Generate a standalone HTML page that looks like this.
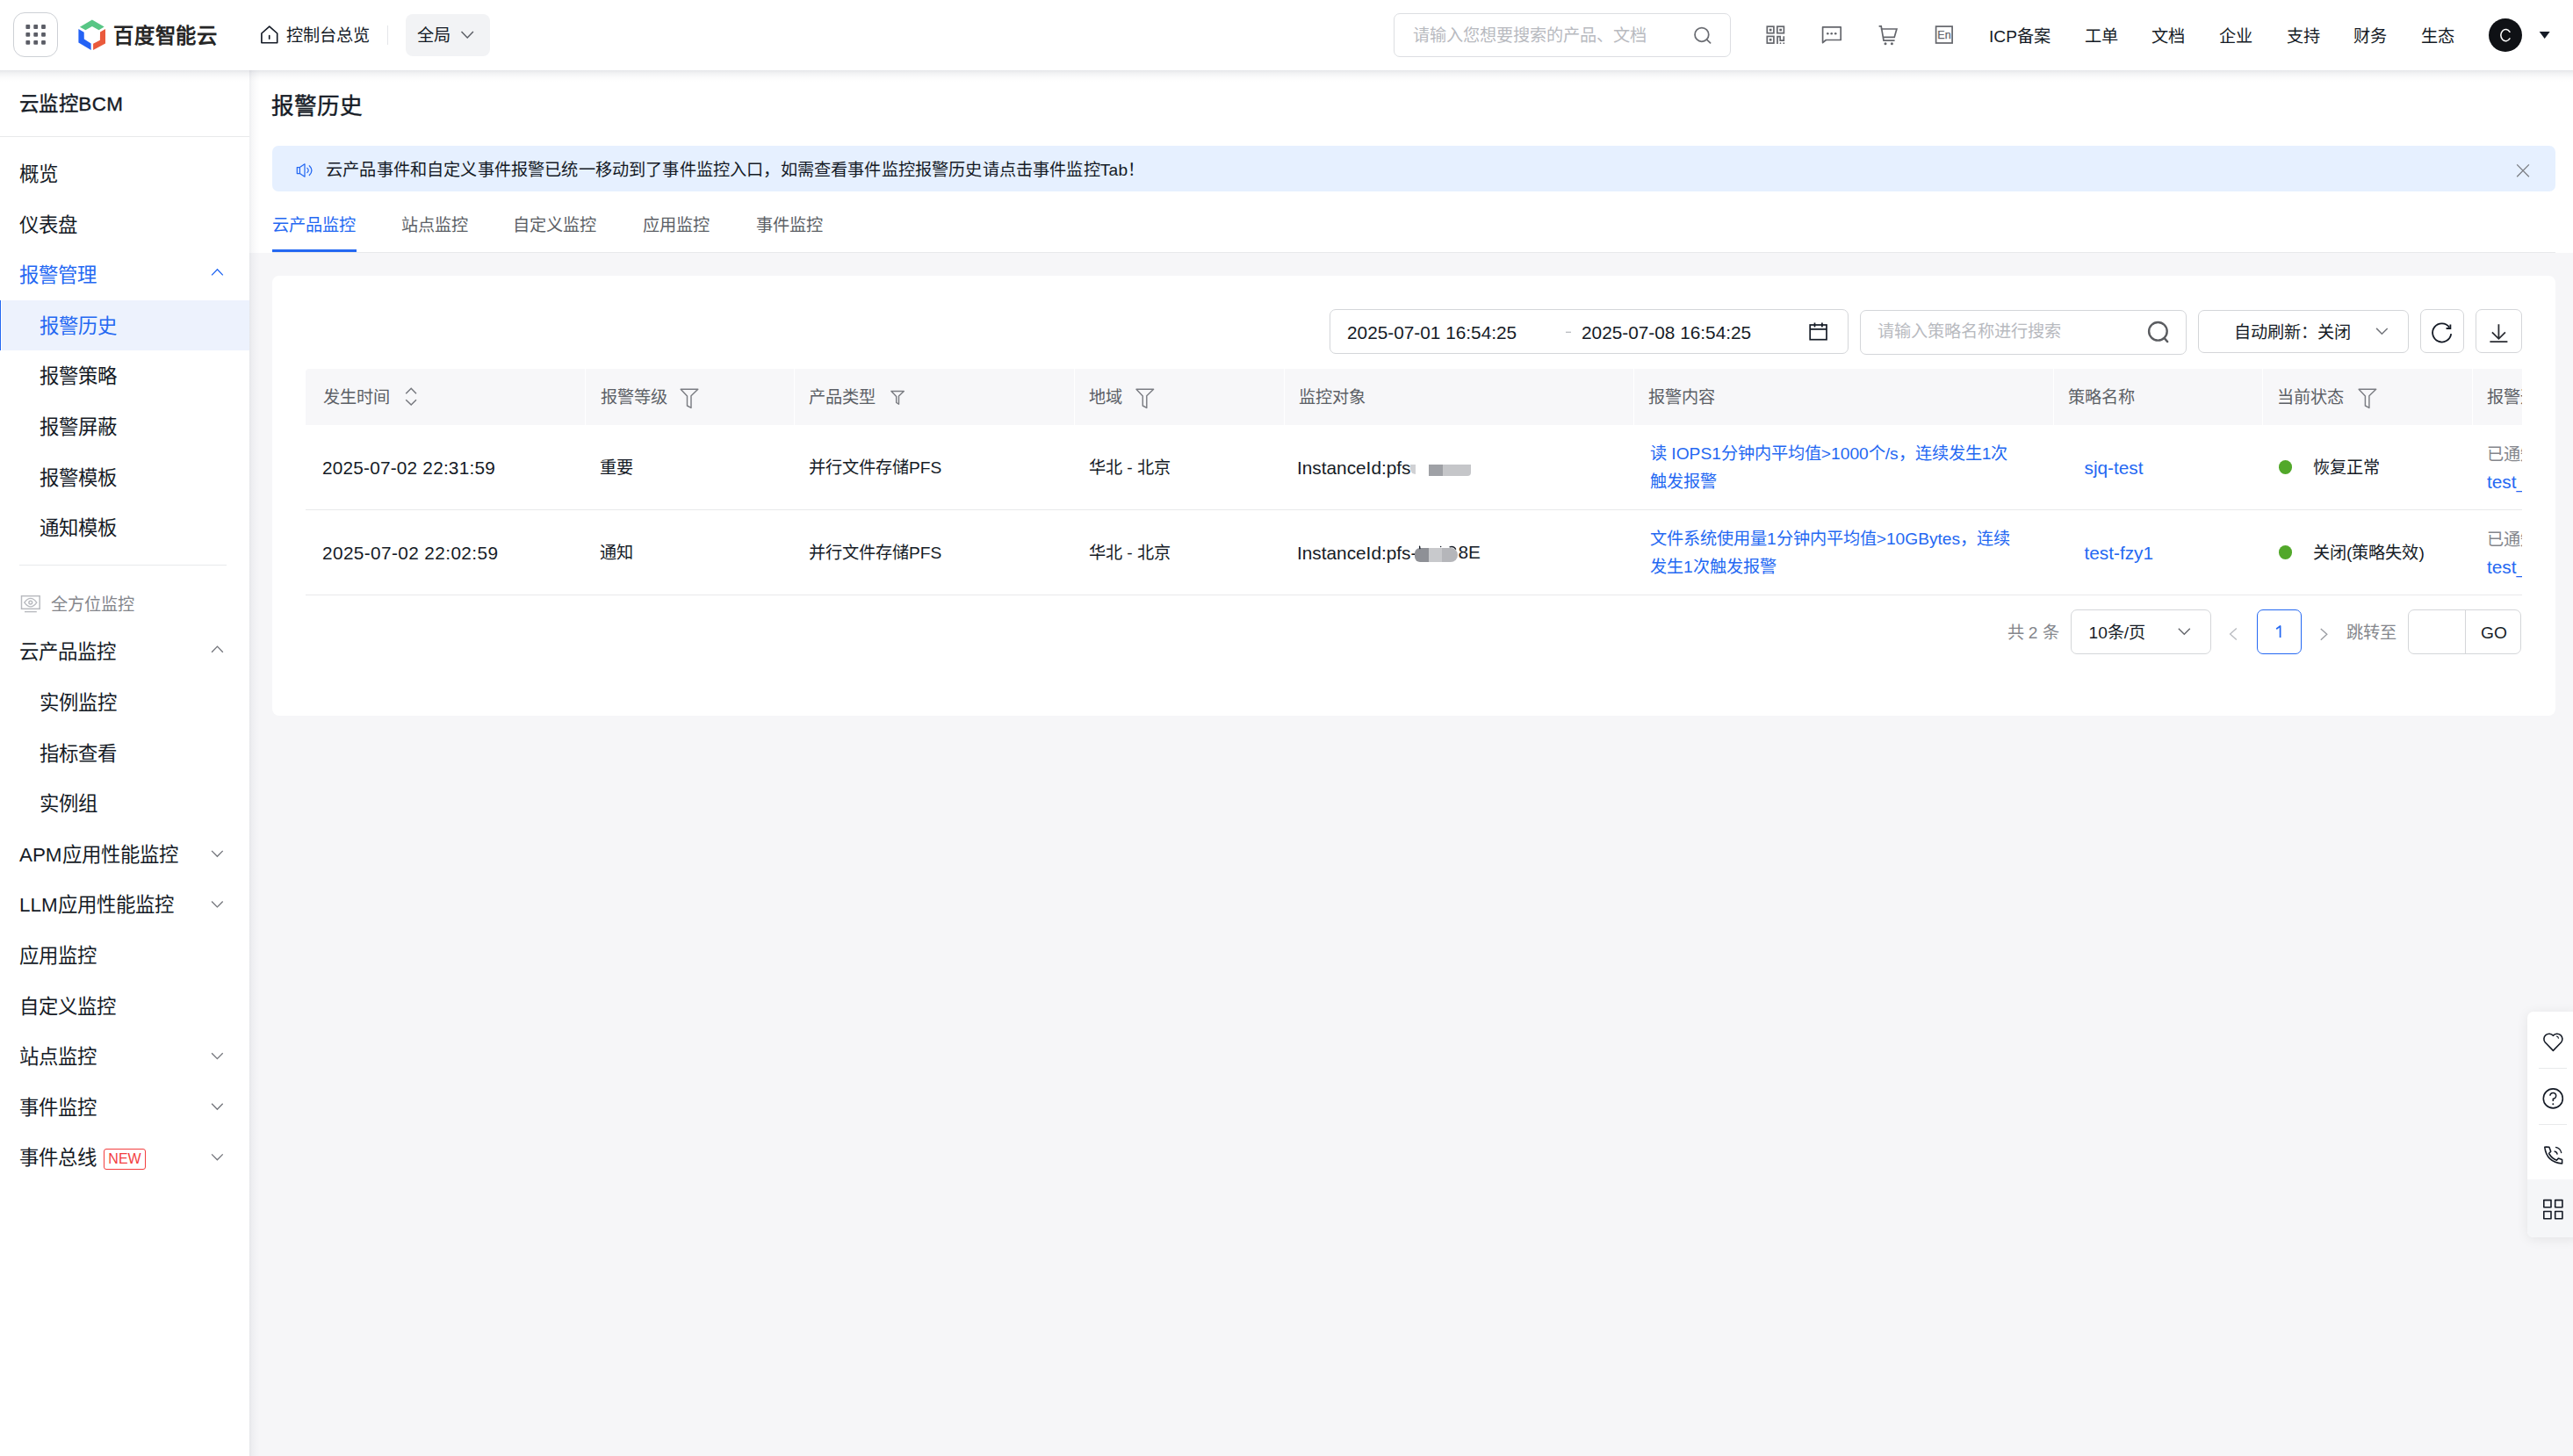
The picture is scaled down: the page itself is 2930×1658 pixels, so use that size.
<!DOCTYPE html>
<html lang="zh-CN">
<head>
<meta charset="utf-8">
<title>报警历史 - 云监控BCM</title>
<style>
*{box-sizing:border-box;margin:0;padding:0}
html,body{width:2930px;height:1658px;overflow:hidden}
body{position:relative;background:#f6f6f8;font-family:"Liberation Sans",sans-serif;color:#151b26}
.a{position:absolute;white-space:nowrap}
.t{position:absolute;white-space:nowrap;line-height:40px;height:40px}
svg{position:absolute;overflow:visible}
</style>
</head>
<body>

<!-- ============ HEADER ============ -->
<div class="a" style="left:0;top:0;width:2930px;height:80px;background:#fff;z-index:5">
  <div class="a" style="left:0;top:80px;width:2930px;height:13px;background:linear-gradient(rgba(20,30,60,0.115) 0,rgba(20,30,60,0.06) 3px,rgba(20,30,60,0.02) 8px,rgba(20,30,60,0) 13px)"></div>
  <!-- grid button -->
  <div class="a" style="left:15px;top:14px;width:51px;height:51px;border:1.7px solid #cdd0d5;border-radius:13px"></div>
  <svg style="left:0;top:0" width="80" height="80">
    <g fill="#5b5d66">
      <rect x="29.4" y="28.1" width="4.8" height="4.8" rx="1"/><rect x="38.3" y="28.1" width="4.8" height="4.8" rx="1"/><rect x="47.1" y="28.1" width="4.8" height="4.8" rx="1"/>
      <rect x="29.4" y="37" width="4.8" height="4.8" rx="1"/><rect x="38.3" y="37" width="4.8" height="4.8" rx="1"/><rect x="47.1" y="37" width="4.8" height="4.8" rx="1"/>
      <rect x="29.4" y="45.9" width="4.8" height="4.8" rx="1"/><rect x="38.3" y="45.9" width="4.8" height="4.8" rx="1"/><rect x="47.1" y="45.9" width="4.8" height="4.8" rx="1"/>
    </g>
  </svg>
  <!-- logo -->
  <svg style="left:0;top:0" width="130" height="80">
    <polygon fill="#58c685" points="104.9,22.5 118.7,30.5 112.6,34.2 104.9,30.1 97.4,34.2 90.9,30.7"/>
    <polygon fill="#2462f5" points="89.4,33.1 95.7,36.7 95.8,44.6 103.6,49.4 103.7,57 89.4,48.5"/>
    <polygon fill="#ea5a3c" points="120,33.1 120,49.4 106.1,57 106.1,49.7 113.9,45.8 114,36.4"/>
  </svg>
  <div class="t" style="left:129px;top:20.6px;font-size:23.3px;font-weight:700;color:#262626;letter-spacing:0.75px">百度智能云</div>
  <!-- home -->
  <svg style="left:0;top:0" width="330" height="80">
    <path d="M297.9,48.75 V38 L306.8,30.1 L315.7,38 V48.75 Z M306.7,40.5 V44.2" fill="none" stroke="#151b26" stroke-width="1.65" stroke-linejoin="round" stroke-linecap="round"/>
  </svg>
  <div class="t" style="left:326px;top:20.5px;font-size:19.2px;color:#151b26">控制台总览</div>
  <div class="a" style="left:441px;top:29px;width:1px;height:22px;background:#e4e6e9"></div>
  <div class="a" style="left:462px;top:16px;width:96px;height:48px;background:#f2f3f5;border-radius:8px"></div>
  <div class="t" style="left:474.5px;top:20.5px;font-size:19.2px;color:#151b26">全局</div>
  <svg style="left:0;top:0" width="560" height="80">
    <path d="M525.5,36 L532.2,43 L538.9,36" fill="none" stroke="#5c5f66" stroke-width="1.5"/>
  </svg>

  <!-- search -->
  <div class="a" style="left:1587px;top:14.5px;width:384px;height:50px;border:1.3px solid #dcdee2;border-radius:7px"></div>
  <div class="t" style="left:1608.5px;top:21px;font-size:19.2px;color:#b8babf">请输入您想要搜索的产品、文档</div>
  <svg style="left:0;top:0" width="1960" height="80">
    <circle cx="1937.9" cy="39.4" r="7.85" fill="none" stroke="#6b6d73" stroke-width="1.75"/>
    <path d="M1943.6,45.1 L1947.6,48.9" stroke="#6b6d73" stroke-width="1.75" stroke-linecap="round"/>
  </svg>
  <!-- icons -->
  <svg style="left:0;top:0" width="2240" height="80">
    <g fill="none" stroke="#64666c" stroke-width="1.7">
      <rect x="2012.3" y="30.2" width="7.6" height="7.5"/>
      <rect x="2023.8" y="30.2" width="7.6" height="7.5"/>
      <rect x="2012.3" y="41.4" width="7.6" height="7.7"/>
      <path d="M2024,50 V41.6 H2027.2 V46.2 H2031.3 V41.2"/>
      <path d="M2075.6,48.6 V30.9 H2096.2 V45.5 H2079.4 Z" stroke-linejoin="round"/>
      <path d="M2139.6,29.9 H2142.2 L2145,46.2 H2157.6"/>
      <path d="M2141.8,33 H2159.9 L2157.2,42.4 H2144"/>
      <rect x="2204.6" y="30.1" width="18.5" height="18.9"/>
    </g>
    <g fill="#64666c">
      <rect x="2014.8" y="32.7" width="2.7" height="2.7"/><rect x="2026.3" y="32.7" width="2.7" height="2.7"/><rect x="2014.8" y="43.9" width="2.7" height="2.7"/>
      <circle cx="2027.5" cy="49.2" r="0.9"/><circle cx="2031.3" cy="49.2" r="0.9"/>
      <circle cx="2081.3" cy="38.2" r="1.3"/><circle cx="2085.7" cy="38.2" r="1.3"/><circle cx="2090.2" cy="38.2" r="1.3"/>
      <circle cx="2147" cy="49.8" r="1.5"/><circle cx="2154.4" cy="49.8" r="1.5"/>
    </g>
  </svg>
  <div class="a" style="left:2204.5px;top:31.5px;width:19px;height:16px;font-size:12.5px;line-height:16px;text-align:center;color:#64666c;-webkit-text-stroke:0.25px #64666c">En</div>
  <div class="t" style="left:2265px;top:22px;font-size:19.2px">ICP备案</div>
  <div class="t" style="left:2374px;top:22px;font-size:19.2px">工单</div>
  <div class="t" style="left:2450px;top:22px;font-size:19.2px">文档</div>
  <div class="t" style="left:2527px;top:22px;font-size:19.2px">企业</div>
  <div class="t" style="left:2604px;top:22px;font-size:19.2px">支持</div>
  <div class="t" style="left:2680px;top:22px;font-size:19.2px">财务</div>
  <div class="t" style="left:2757px;top:22px;font-size:19.2px">生态</div>
  <div class="a" style="left:2834px;top:21px;width:38px;height:38px;border-radius:50%;background:#0f1115"></div>
  <svg style="left:0;top:0" width="2930" height="80"><path d="M2858,36.3 A5.6,6.6 0 1 0 2858,43.9" fill="none" stroke="#fff" stroke-width="1.55" stroke-linecap="round"/></svg>
  <svg style="left:0;top:0" width="2930" height="80"><path d="M2891.7,36 H2903.7 L2897.7,44 Z" fill="#151b26"/></svg>
</div>

<!-- ============ SIDEBAR ============ -->
<div class="a" id="side" style="left:0;top:80px;width:284px;height:1578px;background:#fff;z-index:3">
  <div class="a" style="left:284px;top:0;width:12px;height:1578px;background:linear-gradient(90deg,rgba(20,30,60,0.075) 0,rgba(20,30,60,0.035) 3px,rgba(20,30,60,0.01) 8px,rgba(20,30,60,0) 12px)"></div>
  <div class="t" style="left:22px;top:18.8px;font-size:22.4px;color:#151b26;-webkit-text-stroke:0.4px #151b26;letter-spacing:0.45px">云监控BCM</div>
  <div class="a" style="left:0;top:75px;width:284px;height:1px;background:#e8e9eb"></div>
  <div class="a" style="left:0;top:262px;width:1.2px;height:57px;background:#2468f2"></div>
  <div class="a" style="left:2px;top:262px;width:282px;height:57px;background:#edf2fd"></div>
  <div class="t" style="left:22px;top:98.9px;font-size:22.4px;color:#151b26;">概览</div>
  <div class="t" style="left:22px;top:156.5px;font-size:22.4px;color:#151b26;">仪表盘</div>
  <div class="t" style="left:22px;top:214.1px;font-size:22.4px;color:#2468f2;">报警管理</div>
  <div class="t" style="left:45px;top:271.7px;font-size:22.4px;color:#2468f2;">报警历史</div>
  <div class="t" style="left:45px;top:329.3px;font-size:22.4px;color:#151b26;">报警策略</div>
  <div class="t" style="left:45px;top:386.9px;font-size:22.4px;color:#151b26;">报警屏蔽</div>
  <div class="t" style="left:45px;top:444.5px;font-size:22.4px;color:#151b26;">报警模板</div>
  <div class="t" style="left:45px;top:502.1px;font-size:22.4px;color:#151b26;">通知模板</div>
  <div class="a" style="left:22px;top:562.5px;width:236px;height:1px;background:#e8e9eb"></div>
  <div class="t" style="left:57.5px;top:589.3px;font-size:19.2px;color:#84868c;">全方位监控</div>
  <div class="t" style="left:22px;top:643.4px;font-size:22.4px;color:#151b26;">云产品监控</div>
  <div class="t" style="left:45px;top:701.0px;font-size:22.4px;color:#151b26;">实例监控</div>
  <div class="t" style="left:45px;top:758.6px;font-size:22.4px;color:#151b26;">指标查看</div>
  <div class="t" style="left:45px;top:816.1px;font-size:22.4px;color:#151b26;">实例组</div>
  <div class="t" style="left:22px;top:873.7px;font-size:22.4px;color:#151b26;">APM应用性能监控</div>
  <div class="t" style="left:22px;top:931.3px;font-size:22.4px;color:#151b26;">LLM应用性能监控</div>
  <div class="t" style="left:22px;top:988.9px;font-size:22.4px;color:#151b26;">应用监控</div>
  <div class="t" style="left:22px;top:1046.5px;font-size:22.4px;color:#151b26;">自定义监控</div>
  <div class="t" style="left:22px;top:1104.0px;font-size:22.4px;color:#151b26;">站点监控</div>
  <div class="t" style="left:22px;top:1161.6px;font-size:22.4px;color:#151b26;">事件监控</div>
  <div class="t" style="left:22px;top:1219.2px;font-size:22.4px;color:#151b26;">事件总线</div>
  <div class="a" style="left:118px;top:1227.7px;width:48px;height:24px;border:1.3px solid #f33e3e;border-radius:3px;color:#f33e3e;font-size:16px;line-height:22px;text-align:center">NEW</div>
  <svg style="left:0;top:0" width="284" height="1578">
    <path d="M241.1,233.4 L247.5,226.8 L253.8,233.4" fill="none" stroke="#2468f2" stroke-width="1.35"/>
    <path d="M241.1,662.7 L247.5,656.1 L253.8,662.7" fill="none" stroke="#74767c" stroke-width="1.35"/>
    <path d="M241.1,888.9 L247.4,895.3 L253.7,888.9" fill="none" stroke="#74767c" stroke-width="1.35"/>
    <path d="M241.1,946.5 L247.4,952.9 L253.7,946.5" fill="none" stroke="#74767c" stroke-width="1.35"/>
    <path d="M241.1,1119.2 L247.4,1125.6 L253.7,1119.2" fill="none" stroke="#74767c" stroke-width="1.35"/>
    <path d="M241.1,1176.8 L247.4,1183.2 L253.7,1176.8" fill="none" stroke="#74767c" stroke-width="1.35"/>
    <path d="M241.1,1234.4 L247.4,1240.8 L253.7,1234.4" fill="none" stroke="#74767c" stroke-width="1.35"/>
    <g fill="none" stroke="#b8babf" stroke-width="1.45">
      <rect x="24.5" y="598.7" width="20.7" height="14.6"/>
      <path d="M28,616.6 H41.8"/>
      <path d="M27.8,606.1 Q34.8,596.6 41.8,606.1 Q34.8,615.6 27.8,606.1 Z"/>
      <circle cx="34.8" cy="606.1" r="1.9"/>
    </g>
  </svg>
</div>

<!-- ============ CONTENT ============ -->
<div class="a" id="main" style="left:284px;top:80px;width:2646px;height:208px;background:#fff"></div>
<div class="t" style="left:309px;top:101.2px;font-size:25.6px;color:#151b26;-webkit-text-stroke:0.45px #151b26">报警历史</div>
<div class="a" style="left:310px;top:166px;width:2600px;height:52px;background:#e6f0ff;border-radius:7px"></div>
<svg style="left:0;top:0" width="2930" height="300">
  <g fill="none" stroke="#2468f2" stroke-width="1.25" stroke-linejoin="round">
    <path d="M338.3,190.5 H341.4 V197.5 H338.3 Z"/>
    <path d="M341.4,190.5 L347,186.8 V201.2 L341.4,197.5"/>
    <path d="M349.8,191.4 Q352.6,194 349.8,196.6" stroke-linecap="round"/>
    <path d="M352.3,188.8 Q357.6,194.2 352.3,199.5" stroke-linecap="round"/>
  </g>
  <path d="M2866.2,187.4 L2879.9,201.2 M2879.9,187.4 L2866.2,201.2" stroke="#7b7d83" stroke-width="1.3"/>
</svg>
<div class="t" style="left:371px;top:173.9px;font-size:19.2px;color:#151b26;letter-spacing:0.17px">云产品事件和自定义事件报警已统一移动到了事件监控入口，如需查看事件监控报警历史请点击事件监控Tab！</div>
<div class="t" style="left:310px;top:237.0px;font-size:19.2px;color:#2468f2;">云产品监控</div>
<div class="t" style="left:457px;top:237.0px;font-size:19.2px;color:#5c5f66;">站点监控</div>
<div class="t" style="left:583.5px;top:237.0px;font-size:19.2px;color:#5c5f66;">自定义监控</div>
<div class="t" style="left:732px;top:237.0px;font-size:19.2px;color:#5c5f66;">应用监控</div>
<div class="t" style="left:860.5px;top:237.0px;font-size:19.2px;color:#5c5f66;">事件监控</div>
<div class="a" style="left:310px;top:284px;width:96px;height:3px;background:#2468f2"></div>
<div class="a" style="left:310px;top:287px;width:2600px;height:1px;background:#e8e9eb"></div>
<div class="a" style="left:310px;top:314px;width:2600px;height:501px;background:#fff;border-radius:8px"></div>
<div class="a" style="left:1514px;top:352px;width:591px;height:51px;border:1.3px solid #d4d6d9;border-radius:7px"></div>
<div class="t" style="left:1534px;top:359.3px;font-size:20.8px;color:#151b26;">2025-07-01 16:54:25</div>
<div class="t" style="left:1801px;top:359.3px;font-size:20.8px;color:#151b26;">2025-07-08 16:54:25</div>
<div class="a" style="left:2118px;top:352.5px;width:372px;height:51px;border:1.3px solid #d4d6d9;border-radius:7px"></div>
<div class="t" style="left:2138px;top:358.3px;font-size:19.2px;color:#b8babf;">请输入策略名称进行搜索</div>
<div class="a" style="left:2503px;top:352.5px;width:240px;height:49.5px;border:1.3px solid #d4d6d9;border-radius:7px"></div>
<div class="t" style="left:2544px;top:358.5px;font-size:19.2px;color:#151b26;">自动刷新：关闭</div>
<div class="a" style="left:2756px;top:352.3px;width:50px;height:49.5px;border:1.3px solid #d4d6d9;border-radius:7px"></div>
<div class="a" style="left:2819px;top:352.3px;width:52.5px;height:49.5px;border:1.3px solid #d4d6d9;border-radius:7px"></div>
<svg style="left:0;top:0" width="2930" height="820">
  <path d="M1783,378.3 H1789" stroke="#b8babf" stroke-width="1.3"/>
  <g fill="none" stroke="#151b26" stroke-width="1.7">
    <rect x="2061.2" y="370" width="18.8" height="16.7"/>
    <path d="M2061.2,374.9 H2080 M2066.5,367.6 V372.4 M2074.9,367.6 V372.4"/>
  </g>
  <g fill="none" stroke="#5a5c60" stroke-width="2.4">
    <circle cx="2457.4" cy="377.3" r="10.3"/>
    <path d="M2464.6,385 L2468.2,389.1" stroke-linecap="round"/>
  </g>
  <path d="M2706.1,373.9 L2712.4,380.3 L2718.7,374" fill="none" stroke="#74767c" stroke-width="1.5"/>
  <g fill="none" stroke="#151b26" stroke-width="1.8">
    <path d="M2791.2,380.2 A10.6,10.6 0 1 1 2789.2,372.6"/>
    <path d="M2790.4,369.6 V374 H2785.6"/>
  </g>
  <g fill="none" stroke="#2b2d33" stroke-width="1.8">
    <path d="M2845.4,369.2 V385.5 M2837.9,378.3 L2845.4,385.8 L2852.9,378.3 M2835.4,389.2 H2855.4"/>
  </g>
</svg>
<div class="a" style="left:348px;top:420px;width:2524px;height:64px;background:#f7f7f9;border-radius:4px 0 0 0"></div>
<div class="a" style="left:666px;top:420px;width:1.2px;height:64px;background:#fff"></div>
<div class="a" style="left:904px;top:420px;width:1.2px;height:64px;background:#fff"></div>
<div class="a" style="left:1223px;top:420px;width:1.2px;height:64px;background:#fff"></div>
<div class="a" style="left:1461.5px;top:420px;width:1.2px;height:64px;background:#fff"></div>
<div class="a" style="left:1859.5px;top:420px;width:1.2px;height:64px;background:#fff"></div>
<div class="a" style="left:2338px;top:420px;width:1.2px;height:64px;background:#fff"></div>
<div class="a" style="left:2576px;top:420px;width:1.2px;height:64px;background:#fff"></div>
<div class="a" style="left:2815px;top:420px;width:1.2px;height:64px;background:#fff"></div>
<div class="t" style="left:367.5px;top:433.0px;font-size:19.2px;color:#5c5f66;">发生时间</div>
<div class="t" style="left:684px;top:433.0px;font-size:19.2px;color:#5c5f66;">报警等级</div>
<div class="t" style="left:921px;top:433.0px;font-size:19.2px;color:#5c5f66;">产品类型</div>
<div class="t" style="left:1240px;top:433.0px;font-size:19.2px;color:#5c5f66;">地域</div>
<div class="t" style="left:1478.5px;top:433.0px;font-size:19.2px;color:#5c5f66;">监控对象</div>
<div class="t" style="left:1877px;top:433.0px;font-size:19.2px;color:#5c5f66;">报警内容</div>
<div class="t" style="left:2355px;top:433.0px;font-size:19.2px;color:#5c5f66;">策略名称</div>
<div class="t" style="left:2592.5px;top:433.0px;font-size:19.2px;color:#5c5f66;">当前状态</div>
<div class="a" style="left:2832px;top:420px;width:40px;height:64px;overflow:hidden"><div class="t" style="left:0;top:13px;font-size:19.2px;color:#5c5f66">报警通知</div></div>
<svg style="left:0;top:0" width="2930" height="820">
  <g fill="none" stroke="#76787e" stroke-width="1.5">
    <path d="M462.2,448.2 L468.2,442.3 L474,448.2 M462.2,455.3 L468.2,461 L474,455.3"/>
  </g>
  <g fill="none" stroke="#7b7d83" stroke-width="1.45" stroke-linejoin="round">
    <path d="M775.2,443.3 H794.8 L787,450.7 V464.4 L782.5,462 V451 Z"/>
    <path d="M1015,445.4 H1029.3 L1023.5,451 V460.2 L1020.7,458.5 V451.6 Z"/>
    <path d="M1294,443.3 H1313.6 L1305.8,450.7 V464.4 L1301.3,462 V451 Z"/>
    <path d="M2686.1,443.3 H2705.7 L2697.9,450.7 V464.4 L2693.4,462 V451 Z"/>
  </g>
</svg>
<div class="a" style="left:348px;top:580px;width:2524px;height:1px;background:#e8e9eb"></div>
<div class="a" style="left:348px;top:677px;width:2524px;height:1px;background:#e8e9eb"></div>
<div class="t" style="left:367px;top:513.2px;font-size:20.8px;color:#151b26;letter-spacing:0.2px">2025-07-02 22:31:59</div>
<div class="t" style="left:683px;top:513.2px;font-size:19.2px;color:#151b26;">重要</div>
<div class="t" style="left:921px;top:513.2px;font-size:19.2px;color:#151b26;">并行文件存储PFS</div>
<div class="t" style="left:1240px;top:513.2px;font-size:19.2px;color:#151b26;">华北 - 北京</div>
<div class="t" style="left:1477px;top:513.2px;font-size:20.8px;color:#151b26;">InstanceId:pfs</div>
<div class="t" style="left:1879px;top:497.0px;font-size:19.2px;color:#2468f2;">读 IOPS1分钟内平均值&gt;1000个/s，连续发生1次</div>
<div class="t" style="left:1879px;top:529.4px;font-size:19.2px;color:#2468f2;">触发报警</div>
<div class="t" style="left:2373.5px;top:513.2px;font-size:20.8px;color:#2468f2;">sjq-test</div>
<div class="a" style="left:2594.7px;top:524.4px;width:15.6px;height:15.6px;border-radius:50%;background:#52a82a"></div>
<div class="t" style="left:2634px;top:513.2px;font-size:19.2px;color:#151b26;">恢复正常</div>
<div class="a" style="left:2832px;top:492.2px;width:40px;height:80px;overflow:hidden"><div class="t" style="left:0;top:5.5px;font-size:19.2px;color:#84868c">已通知</div><div class="t" style="left:0;top:37px;font-size:20.8px;color:#2468f2">test_user</div></div>
<div class="t" style="left:367px;top:610.2px;font-size:20.8px;color:#151b26;letter-spacing:0.38px">2025-07-02 22:02:59</div>
<div class="t" style="left:683px;top:610.2px;font-size:19.2px;color:#151b26;">通知</div>
<div class="t" style="left:921px;top:610.2px;font-size:19.2px;color:#151b26;">并行文件存储PFS</div>
<div class="t" style="left:1240px;top:610.2px;font-size:19.2px;color:#151b26;">华北 - 北京</div>
<div class="t" style="left:1477px;top:610.2px;font-size:20.8px;color:#151b26;">InstanceId:pfs-</div>
<div class="t" style="left:1879px;top:594.0px;font-size:19.2px;color:#2468f2;">文件系统使用量1分钟内平均值&gt;10GBytes，连续</div>
<div class="t" style="left:1879px;top:626.4px;font-size:19.2px;color:#2468f2;">发生1次触发报警</div>
<div class="t" style="left:2373.5px;top:610.2px;font-size:20.8px;color:#2468f2;">test-fzy1</div>
<div class="a" style="left:2594.7px;top:621.4px;width:15.6px;height:15.6px;border-radius:50%;background:#52a82a"></div>
<div class="t" style="left:2634px;top:610.2px;font-size:19.2px;color:#151b26;">关闭(策略失效)</div>
<div class="a" style="left:2832px;top:589.2px;width:40px;height:80px;overflow:hidden"><div class="t" style="left:0;top:5.5px;font-size:19.2px;color:#84868c">已通知</div><div class="t" style="left:0;top:37px;font-size:20.8px;color:#2468f2">test_user</div></div>
<div class="a" style="left:1605.8px;top:528.9px;width:6px;height:11.6px;background:#d0d1d4;border-radius:0 0 0 6px"></div>
<div class="a" style="left:1627px;top:528.9px;width:48px;height:13px;background:linear-gradient(90deg,#9fa1a6 0 33%,#c5c6c9 33% 100%);border-radius:0 0 4px 0"></div>
<div class="t" style="left:1660.5px;top:609.4px;font-size:20.8px;color:#151b26;">8E</div>
<div class="a" style="left:1611.3px;top:623.9px;width:49px;height:15.7px;background:linear-gradient(90deg,#8e9096 0 32%,#c8c9cc 32% 64%,#b5b6ba 64% 100%);border-radius:6px 8px 8px 6px"></div>
<svg style="left:0;top:0" width="1700" height="660"><g fill="none" stroke="#151b26" stroke-width="1.4" stroke-linecap="round"><path d="M1616.6,622.3 L1616.9,624.6"/><path d="M1651,622.8 Q1655.5,621.6 1657.6,625.3" stroke-width="1.3"/></g><circle cx="1640.6" cy="622.6" r="0.75" fill="#151b26"/></svg>
<div class="t" style="left:2285.5px;top:700.9px;font-size:19.2px;color:#84868c;">共 2 条</div>
<div class="a" style="left:2358px;top:694px;width:159.5px;height:50.5px;border:1.3px solid #d4d6d9;border-radius:7px"></div>
<div class="t" style="left:2378.5px;top:700.5px;font-size:19.2px;color:#151b26;">10条/页</div>
<div class="a" style="left:2570px;top:694px;width:50.5px;height:50.5px;border:1.3px solid #2468f2;border-radius:7px"></div>
<svg style="left:0;top:0" width="2700" height="760"><path d="M2592.2,716.2 L2596.6,712.9 V726" fill="none" stroke="#2468f2" stroke-width="1.75" stroke-linejoin="round"/></svg>
<div class="t" style="left:2672px;top:700.5px;font-size:19.2px;color:#84868c;">跳转至</div>
<div class="a" style="left:2742px;top:694px;width:128.5px;height:50.5px;border:1.3px solid #d4d6d9;border-radius:7px"></div>
<div class="a" style="left:2807px;top:694px;width:1.3px;height:50.5px;background:#d4d6d9"></div>
<div class="t" style="left:2825px;top:700.5px;font-size:19.2px;color:#151b26;">GO</div>
<svg style="left:0;top:0" width="2930" height="820">
  <path d="M2480.8,715.8 L2487.3,722.3 L2493.8,715.8" fill="none" stroke="#64666c" stroke-width="1.45"/>
  <path d="M2546.8,715.5 L2539.6,722 L2546.8,728.4" fill="none" stroke="#b8babf" stroke-width="1.35"/>
  <path d="M2642.8,715.9 L2649.8,722.3 L2642.8,728.8" fill="none" stroke="#9a9ca2" stroke-width="1.35"/>
</svg>
<div class="a" style="left:2878px;top:1151.6px;width:60px;height:257px;background:#fff;border-radius:7px;box-shadow:0 2px 14px rgba(0,0,0,0.08);overflow:hidden"><div class="a" style="left:0;top:191.6px;width:60px;height:66px;background:#f5f6f8"></div></div>
<div class="a" style="left:2891.3px;top:1216px;width:31.4px;height:1px;background:#e8e9eb"></div>
<div class="a" style="left:2891.3px;top:1280px;width:31.4px;height:1px;background:#e8e9eb"></div>
<svg style="left:0;top:0" width="2930" height="1658">
  <g fill="none" stroke="#151b26" stroke-width="1.6" stroke-linejoin="round">
    <path d="M2907.4,1196.4 L2898.3,1187 A5.5,5.5 0 0 1 2907.4,1179.3 A5.5,5.5 0 0 1 2916.5,1187 Z"/>
    <path d="M2911.2,1179.8 A3.2,3.2 0 0 1 2913.6,1182.6" stroke-width="1.2"/>
    <circle cx="2907.3" cy="1250.9" r="11"/>
    <path d="M2903.9,1247.8 A3.4,3.4 0 1 1 2907.3,1251.2 V1254" stroke-width="1.5"/>
    <path d="M2899.5,1306 L2902.9,1306.2 L2904.7,1311.3 L2902.6,1313.5 Q2906,1319.4 2911.4,1321.2 L2913.3,1319.1 L2917.6,1320.5 V1325 Q2900,1323.6 2897.8,1306.4 Z"/>
    <path d="M2908.6,1311 A4.2,4.2 0 0 1 2912.2,1314.6 M2910,1306.3 A8.2,8.2 0 0 1 2916.8,1313.1" stroke-width="1.3"/>
    <rect x="2896.8" y="1366.6" width="8.2" height="8.2"/>
    <rect x="2909.7" y="1366.6" width="8.2" height="8.2"/>
    <rect x="2896.8" y="1379.5" width="8.2" height="8.2"/>
    <rect x="2909.7" y="1379.5" width="8.2" height="8.2"/>
  </g>
  <circle cx="2907.3" cy="1257.3" r="1" fill="#151b26"/>
</svg>


</body>
</html>
